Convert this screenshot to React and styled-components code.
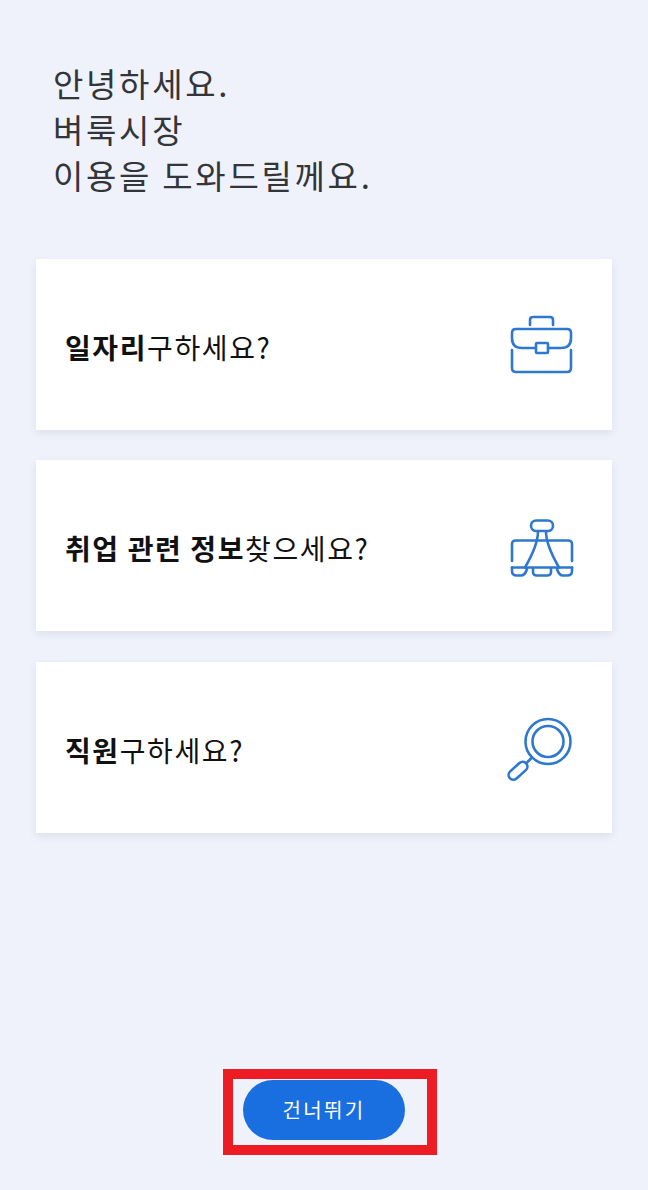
import React from "react";
import styled, { createGlobalStyle } from "styled-components";

const Global = createGlobalStyle`
  html, body { margin: 0; padding: 0; background: #eff2fb; }
  * { box-sizing: border-box; }
`;

const Page = styled.main`
  width: 648px;
  height: 1190px;
  padding: 60px 36px 35px;
  display: flex;
  flex-direction: column;
  background: #eff2fb;
  font-family: "Noto Sans CJK KR", sans-serif;
`;

const Greeting = styled.h1`
  margin: 0 0 60.9px 17px;
  font-size: 33px;
  line-height: 46px;
  font-weight: 400;
  letter-spacing: 2.7px;
  color: #333538;
`;

const Line = styled.div``;

const Cards = styled.div`
  display: flex;
  flex-direction: column;
  gap: 30.5px;
`;

const Card = styled.button`
  height: 171px;
  padding: 0 30px 0 29px;
  border: 0;
  background: #fff;
  box-shadow: 0 3px 8px rgba(60, 70, 100, 0.1);
  display: flex;
  align-items: center;
  justify-content: space-between;
  font: inherit;
  color: #111;
`;

const Label = styled.span`
  padding-top: 5px;
  font-size: 28px;
  letter-spacing: 1.6px;
  font-weight: 400;
`;

const Strong = styled.strong`
  font-weight: 700;
`;

const Icon = styled.svg`
  width: 80px;
  height: 70px;
  fill: none;
  stroke: #2f78d0;
  stroke-width: 2.6;
  stroke-linecap: round;
  stroke-linejoin: round;
`;

const Footer = styled.div`
  margin-top: auto;
  margin-left: 12px;
  display: flex;
  justify-content: center;
`;

const Highlight = styled.div`
  border: 10px solid #ed1c24;
  padding: 1px 22px 5px 10px;
  display: flex;
`;

const Skip = styled.button`
  width: 162px;
  height: 60px;
  padding: 0 0 2px;
  border: 0;
  border-radius: 30px;
  background: #1a6fe0;
  color: #fff;
  font-family: inherit;
  font-size: 20px;
  letter-spacing: 2.4px;
`;

const Briefcase = () => (
  <Icon viewBox="0 0 80 70">
    <path d="M28 16V11Q28 8 31 8H48Q51 8 51 11V16" />
    <path d="M34 39H20Q10 39 10 29V24Q10 20 14 20H65Q69 20 69 24V29Q69 39 59 39H46" />
    <rect x="34" y="34" width="12" height="10" rx="1" />
    <path d="M10 41V59Q10 63 14 63H65Q69 63 69 59V41" />
  </Icon>
);

const Clip = () => (
  <Icon viewBox="0 0 80 70">
    <rect x="29" y="9.5" width="22" height="10.5" rx="5.2" />
    <path d="M36 20.5Q36 34 23 56.5M44 20.5Q44 34 57 56.5" />
    <path d="M10 50V33Q10 29.5 14 29.5H66Q70 29.5 70 33V50" />
    <path d="M10 56.5H70" />
    <path d="M10 56.5V60Q10 64.5 15 64.5H19Q23 64.5 25 58" />
    <path d="M31 57V61Q31 64.5 35 64.5H45Q49 64.5 49 61V57" />
    <path d="M55 58Q57 64.5 61 64.5H65Q70 64.5 70 60V56.5" />
  </Icon>
);

const Magnifier = () => (
  <Icon viewBox="0 0 80 70">
    <circle cx="46" cy="29.5" r="22.5" />
    <circle cx="46" cy="29.5" r="15.5" />
    <path d="M30 45.5L25 50.5" />
    <rect x="5" y="54" width="22" height="9.5" rx="4.75" transform="rotate(-42 16 58.75)" />
  </Icon>
);

export default function App() {
  return (
    <Page>
      <Global />
      <Greeting>
        <Line>안녕하세요.</Line>
        <Line>벼룩시장</Line>
        <Line>이용을 도와드릴께요.</Line>
      </Greeting>
      <Cards>
        <Card>
          <Label><Strong>일자리</Strong>구하세요?</Label>
          <Briefcase />
        </Card>
        <Card>
          <Label><Strong>취업 관련 정보</Strong>찾으세요?</Label>
          <Clip />
        </Card>
        <Card>
          <Label><Strong>직원</Strong>구하세요?</Label>
          <Magnifier />
        </Card>
      </Cards>
      <Footer>
        <Highlight>
          <Skip>건너뛰기</Skip>
        </Highlight>
      </Footer>
    </Page>
  );
}
